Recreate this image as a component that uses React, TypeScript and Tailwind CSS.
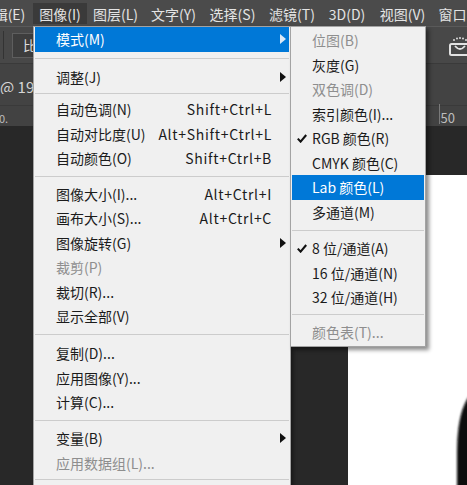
import React from "react";

type Entry =
  | { label: string; shortcut?: string; arrow?: boolean; disabled?: boolean; hl?: boolean; check?: boolean }
  | { sep: string };

const mainItems: Entry[] = [
  { label: "模式(M)", arrow: true, hl: true },
  { sep: "h-[13px]" },
  { label: "调整(J)", arrow: true },
  { sep: "h-[8px]" },
  { label: "自动色调(N)", shortcut: "Shift+Ctrl+L" },
  { label: "自动对比度(U)", shortcut: "Alt+Shift+Ctrl+L" },
  { label: "自动颜色(O)", shortcut: "Shift+Ctrl+B" },
  { sep: "h-[11px]" },
  { label: "图像大小(I)...", shortcut: "Alt+Ctrl+I" },
  { label: "画布大小(S)...", shortcut: "Alt+Ctrl+C" },
  { label: "图像旋转(G)", arrow: true },
  { label: "裁剪(P)", disabled: true },
  { label: "裁切(R)..." },
  { label: "显示全部(V)" },
  { sep: "h-[12.5px]" },
  { label: "复制(D)..." },
  { label: "应用图像(Y)..." },
  { label: "计算(C)..." },
  { sep: "h-[11.5px]" },
  { label: "变量(B)", arrow: true },
  { label: "应用数据组(L)...", disabled: true },
  { sep: "h-[8px]" },
];

const subItems: Entry[] = [
  { label: "位图(B)", disabled: true },
  { label: "灰度(G)" },
  { label: "双色调(D)", disabled: true },
  { label: "索引颜色(I)..." },
  { label: "RGB 颜色(R)", check: true },
  { label: "CMYK 颜色(C)" },
  { label: "Lab 颜色(L)", hl: true },
  { label: "多通道(M)" },
  { sep: "h-[12px]" },
  { label: "8 位/通道(A)", check: true },
  { label: "16 位/通道(N)" },
  { label: "32 位/通道(H)" },
  { sep: "h-[10.5px]" },
  { label: "颜色表(T)...", disabled: true },
];

const bar = [
  { t: "编辑(E)", c: "ml-[-28px] w-[61px]" },
  { t: "图像(I)", c: "w-[54px] bg-[#3a3a3a]" },
  { t: "图层(L)", c: "w-[57px]" },
  { t: "文字(Y)", c: "w-[59px]" },
  { t: "选择(S)", c: "w-[59px]" },
  { t: "滤镜(T)", c: "w-[60px]" },
  { t: "3D(D)", c: "w-[50px]" },
  { t: "视图(V)", c: "w-[61px]" },
  { t: "窗口(W)", c: "w-[61px]" },
];

function Arrow({ white }: { white?: boolean }) {
  return (
    <svg width="6" height="10" viewBox="0 0 6 10" className="absolute right-[3px] top-[7px]">
      <polygon points="0,0 6,5 0,10" fill={white ? "#dbe9f7" : "#111"} />
    </svg>
  );
}

function Check() {
  return (
    <svg width="10" height="9" viewBox="0 0 10 9" className="absolute left-[5px] top-[8px]">
      <path d="M0.8 4.6 L3.6 7.6 L9.2 1" fill="none" stroke="#111" strokeWidth="2.1" />
    </svg>
  );
}

function MenuList({ items, textPad, shortPad }: { items: Entry[]; textPad: string; shortPad: string }) {
  return (
    <>
      {items.map((it, i) => {
        if ("sep" in it) {
          return (
            <div key={i} className={`flex items-center px-px ${it.sep}`}>
              <div className="h-px w-full bg-[#cccccc]" />
            </div>
          );
        }
        const color = it.hl ? "bg-[#0078d7] text-white" : it.disabled ? "text-[#8e8e8e]" : "text-[#1b1b1b]";
        return (
          <div key={i} className={`relative mx-px flex h-[24.5px] items-center justify-between whitespace-nowrap text-[14px] leading-none ${textPad} ${shortPad} ${color}`}>
            {it.check && <Check />}
            <span>{it.label}</span>
            {it.shortcut && <span className="tracking-[0.7px] text-[#1b1b1b]">{it.shortcut}</span>}
            {it.arrow && <Arrow white={it.hl} />}
          </div>
        );
      })}
    </>
  );
}

export default function App() {
  return (
    <div className="relative flex h-[485px] w-[467px] flex-col overflow-hidden bg-[#282828] [font-family:'Noto_Sans_CJK_SC','Noto_Sans',sans-serif]">
      {/* menu bar */}
      <div className="flex h-[26px] shrink-0 bg-[#4b4b4b] text-[14px] leading-none text-[#e4e4e4]">
        {bar.map((b) => (
          <div key={b.t} className={`mt-[3px] flex h-[21px] shrink-0 items-center justify-center whitespace-nowrap ${b.c}`}>
            {b.t}
          </div>
        ))}
      </div>
      {/* options bar */}
      <div className="flex h-[37px] shrink-0 items-center border-t border-[#5a5a5a] bg-[#484848]">
        <div className="ml-[3px] h-[28px] w-px bg-[#333]" />
        <div className="ml-[8px] flex h-[25px] w-[40px] items-center border border-[#5e5e5e] bg-[#3d3d3d] pl-[10px] text-[14px] text-[#dcdcdc]">
          <span className="w-[11px] overflow-hidden whitespace-nowrap">比例</span>
        </div>
        <div className="ml-auto mr-[-4px] mt-[4px]">
          <svg width="24" height="20" viewBox="0 0 24 20">
            <g fill="#dcdcdc">
              <circle cx="7" cy="3" r="1" />
              <circle cx="10" cy="1.5" r="1" />
              <circle cx="13" cy="1" r="1" />
              <circle cx="16" cy="1.5" r="1" />
              <circle cx="19" cy="3" r="1" />
            </g>
            <rect x="3" y="7" width="20" height="11" rx="1.5" fill="none" stroke="#e2e2e2" strokeWidth="2" />
            <path d="M8 9 Q13 15 18 9" fill="none" stroke="#e2e2e2" strokeWidth="1.8" />
          </svg>
        </div>
      </div>
      {/* document tab row */}
      <div className="flex h-[42px] shrink-0 items-start border-t border-[#3a3a3a] bg-[#434343] pt-[15px] text-[15px] leading-none text-[#d6d6d6]">
        <span className="w-[33px] overflow-hidden whitespace-nowrap">@ 19.5%</span>
      </div>
      {/* ruler */}
      <div className="relative flex h-[21px] shrink-0 items-end justify-between border-t border-[#3a3a3a] bg-[#424242] pb-[2px] text-[11px] leading-none text-[#bdbdbd]">
        <span className="-ml-[1px]">0.</span>
        <div className="flex items-end pr-[12px]">
          <div className="mr-[1px] h-[20px] w-px bg-[#7a7a7a]" />
          <span className="text-[13px]">50</span>
        </div>
      </div>
      {/* canvas */}
      <div className="flex-1 bg-[#282828] pl-[348px] pt-[49px]">
        <div className="relative h-full w-full overflow-hidden bg-white">
          <svg width="119" height="310" viewBox="0 0 119 310" className="absolute left-0 top-0">
            <defs>
              <filter id="bl">
                <feGaussianBlur stdDeviation="1.2" />
              </filter>
            </defs>
            <path d="M124 218 C114 228 109 248 109 279 L109 320 L130 320 Z" fill="#0a0a0a" filter="url(#bl)" />
          </svg>
        </div>
      </div>

      {/* main dropdown */}
      <div className="absolute left-[33px] top-[26px] h-[470px] w-[258px] border border-[#a3a3a3] bg-[#f0f0f0] shadow-[2px_2px_4px_rgba(0,0,0,0.45)]">
        <MenuList items={mainItems} textPad="pl-[21px]" shortPad="pr-[17px]" />
      </div>

      {/* submenu */}
      <div className="absolute left-[290px] top-[26px] w-[136px] border border-[#a3a3a3] bg-[#f0f0f0] pb-px pt-px shadow-[3px_3px_4px_rgba(0,0,0,0.45)]">
        <MenuList items={subItems} textPad="pl-[20px]" shortPad="pr-[10px]" />
      </div>
    </div>
  );
}
